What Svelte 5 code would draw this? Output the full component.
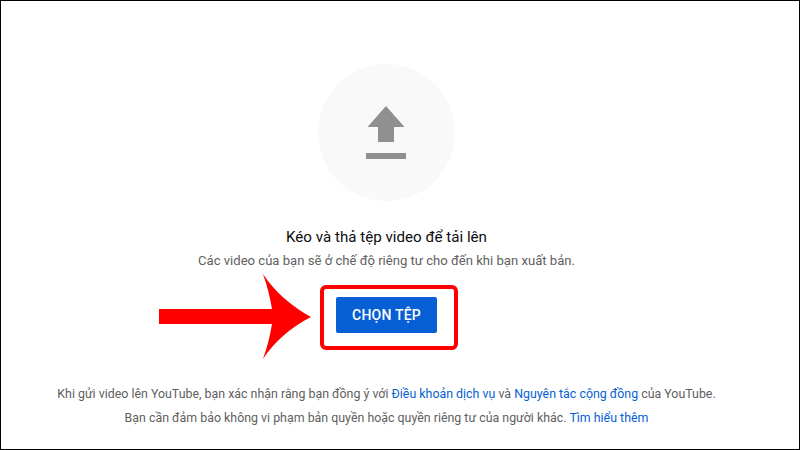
<script lang="ts">
	const arrow = "M159 309H272C270 297 267 285 263 274C274 291 291 306 311 317C291 327 274 342 263 359C267 348 270 336 272 324H159Z";
</script>

<div class="page">
	<div class="circle">
		<svg width="62" height="56" viewBox="0 0 62 56">
			<path d="M31 0L49.500 21H39V36H23V21H12.500Z" />
			<rect x="11" y="47" width="40" height="6" />
		</svg>
	</div>
	<h1>Kéo và thả tệp video để tải lên</h1>
	<p class="sub">Các video của bạn sẽ ở chế độ riêng tư cho đến khi bạn xuất bản.</p>
	<button type="button">CHỌN TỆP</button>
	<footer>
		<p>Khi gửi video lên YouTube, bạn xác nhận rằng bạn đồng ý với <a href="#terms">Điều khoản dịch vụ</a> và <a href="#rules">Nguyên tắc cộng đồng</a> của YouTube.</p>
		<p>Bạn cần đảm bảo không vi phạm bản quyền hoặc quyền riêng tư của người khác. <a href="#more">Tìm hiểu thêm</a></p>
	</footer>

	<div class="frame"></div>
	<svg class="arrow" width="800" height="450" viewBox="0 0 800 450"><path d={arrow} /></svg>
</div>

<style>
	:global(body) {
		margin: 0;
	}

	.page {
		position: relative;
		box-sizing: border-box;
		width: 800px;
		height: 450px;
		padding: 63px 27px 0 0;
		border: 1px solid #000;
		display: flex;
		flex-direction: column;
		align-items: center;
		background: #fff;
		font-family: Roboto, "Noto Sans", sans-serif;
		overflow: hidden;
	}

	.circle {
		width: 137px;
		height: 137px;
		border-radius: 50%;
		background: #f9f9f9;
		display: flex;
		align-items: center;
		justify-content: center;
	}

	.circle svg {
		fill: #909090;
		margin-top: 2px;
		margin-left: -1px;
	}

	h1 {
		margin: 25px 0 0;
		font-size: 15.15px;
		line-height: 22px;
		font-weight: 400;
		color: #0d0d0d;
	}

	.sub {
		margin: 3px 0 0;
		font-size: 13.1px;
		line-height: 20px;
		color: #606060;
	}

	button {
		margin-top: 26px;
		width: 101px;
		height: 36px;
		border: 0;
		border-radius: 2px;
		background: #065fd4;
		color: #fff;
		font: 500 14px Roboto, sans-serif;
		letter-spacing: 0.2px;
		padding: 0;
	}

	footer {
		margin-top: 49px;
		font-size: 12.4px;
		line-height: 24px;
		color: #606060;
		text-align: center;
	}

	footer p {
		margin: 0;
	}

	a {
		color: #065fd4;
		text-decoration: none;
	}

	.frame {
		position: absolute;
		left: 319px;
		top: 284px;
		width: 138px;
		height: 65px;
		box-sizing: border-box;
		border: 4px solid #f00;
		border-radius: 6px;
	}

	.arrow {
		position: absolute;
		left: -1px;
		top: -1px;
		fill: #f00;
	}
</style>
